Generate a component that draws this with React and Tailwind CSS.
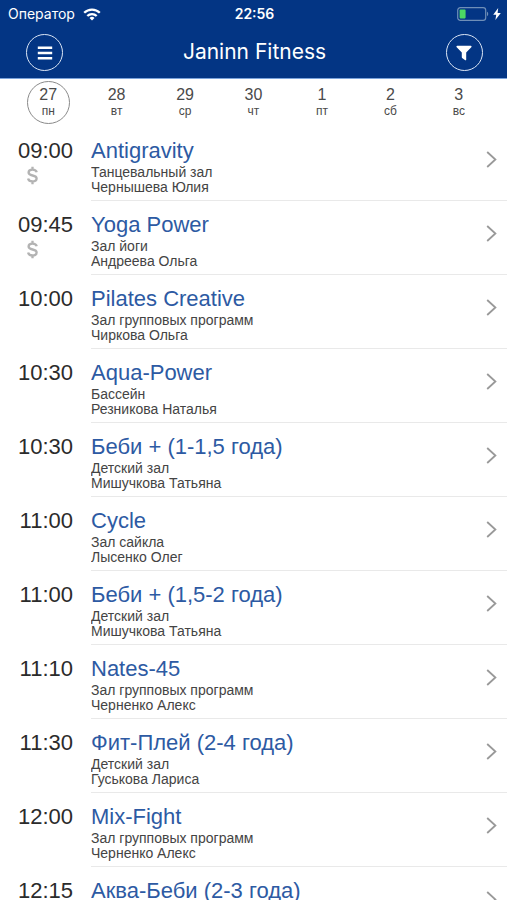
import { useState } from 'react';

const DAYS = [
  { date: 27, label: 'пн' },
  { date: 28, label: 'вт' },
  { date: 29, label: 'ср' },
  { date: 30, label: 'чт' },
  { date: 1, label: 'пт' },
  { date: 2, label: 'сб' },
  { date: 3, label: 'вс' },
];

const CLASSES = [
  { time: '09:00', title: 'Antigravity', room: 'Танцевальный зал', trainer: 'Чернышева Юлия', paid: true },
  { time: '09:45', title: 'Yoga Power', room: 'Зал йоги', trainer: 'Андреева Ольга', paid: true },
  { time: '10:00', title: 'Pilates Creative', room: 'Зал групповых программ', trainer: 'Чиркова Ольга' },
  { time: '10:30', title: 'Aqua-Power', room: 'Бассейн', trainer: 'Резникова Наталья' },
  { time: '10:30', title: 'Беби + (1-1,5 года)', room: 'Детский зал', trainer: 'Мишучкова Татьяна' },
  { time: '11:00', title: 'Cycle', room: 'Зал сайкла', trainer: 'Лысенко Олег' },
  { time: '11:00', title: 'Беби + (1,5-2 года)', room: 'Детский зал', trainer: 'Мишучкова Татьяна' },
  { time: '11:10', title: 'Nates-45', room: 'Зал групповых программ', trainer: 'Черненко Алекс' },
  { time: '11:30', title: 'Фит-Плей (2-4 года)', room: 'Детский зал', trainer: 'Гуськова Лариса' },
  { time: '12:00', title: 'Mix-Fight', room: 'Зал групповых программ', trainer: 'Черненко Алекс' },
  { time: '12:15', title: 'Аква-Беби (2-3 года)' },
];

function StatusBar() {
  return (
    <div className="grid grid-cols-3 items-center h-7 px-2 pr-[6px] text-white font-['Inter',sans-serif]">
      <div className="flex items-center gap-2 text-sm">
        <span>Оператор</span>
        <svg className="w-[18px] h-[13px]" viewBox="0 0 18 13" fill="none" stroke="currentColor" strokeWidth="2.3">
          <path d="M1.2 4.8a11 11 0 0 1 15.6 0" />
          <path d="M4.3 8a6.700 6.700 0 0 1 9.400 0" />
          <path d="M9 12.6 6.5 10a3.600 3.600 0 0 1 5 0z" fill="currentColor" stroke="none" />
        </svg>
      </div>
      <span className="text-center text-sm font-semibold">22:56</span>
      <div className="flex items-center justify-end gap-1">
        <svg className="w-8 h-[14px]" viewBox="0 0 32 14" fill="none">
          <rect x="0.7" y="0.7" width="28" height="12.6" rx="2.6" stroke="#6f8fb8" strokeWidth="1.2" />
          <rect x="2.6" y="2.6" width="6" height="8.8" rx="0.8" fill="#4cd964" />
          <path d="M30 4.8c1.6.6 1.6 3.8 0 4.4z" fill="#6f8fb8" />
        </svg>
        <svg className="w-2 h-3" viewBox="0 0 8 12" fill="currentColor">
          <path d="M5.2 0 0.2 6.8h3L2.4 12 7.8 4.9H4.6z" />
        </svg>
      </div>
    </div>
  );
}

function RoundButton({ label, children }) {
  return (
    <button
      type="button"
      aria-label={label}
      className="flex items-center justify-center w-[37px] h-[37px] rounded-full border border-[#dbe5f5] text-white"
    >
      {children}
    </button>
  );
}

function Header() {
  return (
    <header className="shrink-0 bg-[#033584] border-b border-[#7ba3dc]">
      <StatusBar />
      <div className="flex items-start justify-between h-[50px] pt-[6px] pl-[26px] pr-6">
        <RoundButton label="Меню">
          <svg className="w-4 h-[14px]" viewBox="0 0 16 14" stroke="currentColor" strokeWidth="2.6">
            <path d="M0.8 1.8h14.4M0.8 7h14.4M0.8 12.2h14.4" />
          </svg>
        </RoundButton>
        <h1 className="text-[21px] leading-9 text-white font-['Inter',sans-serif] font-normal">
          Janinn Fitness
        </h1>
        <RoundButton label="Фильтр">
          <svg className="w-4 h-4" viewBox="0 0 16 16" fill="currentColor">
            <path d="M1.2 0.8h13.6c.8 0 1 .8.5 1.4L10.2 7.6v7.2c0 .5-.6.7-1 .4L6.1 12.900a.8.8 0 0 1-.3-.6V7.600L.7 2.200C.2 1.600.4.8 1.200.8z" />
          </svg>
        </RoundButton>
      </div>
    </header>
  );
}

function DayPicker({ selected, onSelect }) {
  return (
    <nav className="shrink-0 grid grid-cols-7 h-12 px-[14px] pt-[2px]">
      {DAYS.map((day) => (
        <button
          key={day.date}
          type="button"
          onClick={() => onSelect(day.date)}
          className={`flex flex-col items-center justify-self-center w-[43px] h-[43px] pt-1 rounded-full border text-[#4a4a4a] ${
            day.date === selected ? 'border-[#8a8a8a]' : 'border-transparent'
          }`}
        >
          <span className="text-base leading-[18px]">{day.date}</span>
          <span className="text-xs leading-[14px]">{day.label}</span>
        </button>
      ))}
    </nav>
  );
}

function ClassRow({ item }) {
  return (
    <li>
      <a href="#" className="flex min-h-[74px]">
        <div className="shrink-0 w-[91px] pt-[10px] px-[18px] text-right">
          <p className="text-[22px] leading-7 text-[#2b2b2b]">{item.time}</p>
          {item.paid && (
            <svg
              className="w-[11px] h-[19px] mt-px ml-[9px]"
              viewBox="0 0 10 18"
              fill="none"
              stroke="#b3b3b3"
              strokeWidth="2.2"
            >
              <path d="M9 5.9C8.600 4.300 7 3.400 5 3.400 2.800 3.400 1.300 4.500 1.300 6.200c0 3.900 7.600 1.700 7.600 5.600 0 1.700-1.600 2.800-3.900 2.800-2.300 0-3.900-1-4.200-2.800M5 .6v3M5 14.400v3" />
            </svg>
          )}
        </div>
        <div className="flex flex-1 min-w-0 items-center border-b border-[#e9e9e9] pr-[10px]">
          <div className="flex-1 min-w-0 self-start pt-[10px]">
            <h2 className="text-[22px] leading-7 text-[#2d5aa3] truncate">{item.title}</h2>
            {item.room && <p className="text-sm leading-[15px] text-[#444] truncate">{item.room}</p>}
            {item.trainer && <p className="text-sm leading-[15px] text-[#444] truncate">{item.trainer}</p>}
          </div>
          <svg
            className="shrink-0 w-[11px] h-[17px] mb-2"
            viewBox="0 0 11 17"
            fill="none"
            stroke="#999"
            strokeWidth="1.8"
          >
            <path d="M1.200 1l8.200 7.500L1.200 16" />
          </svg>
        </div>
      </a>
    </li>
  );
}

export default function App() {
  const [selectedDay, setSelectedDay] = useState(27);

  return (
    <div className="flex flex-col h-screen bg-white font-['Liberation_Sans',Arial,sans-serif]">
      <Header />
      <DayPicker selected={selectedDay} onSelect={setSelectedDay} />
      <ul className="flex-1 min-h-0 overflow-y-auto [scrollbar-width:none]">
        {CLASSES.map((item) => (
          <ClassRow key={`${item.time}-${item.title}`} item={item} />
        ))}
      </ul>
    </div>
  );
}
